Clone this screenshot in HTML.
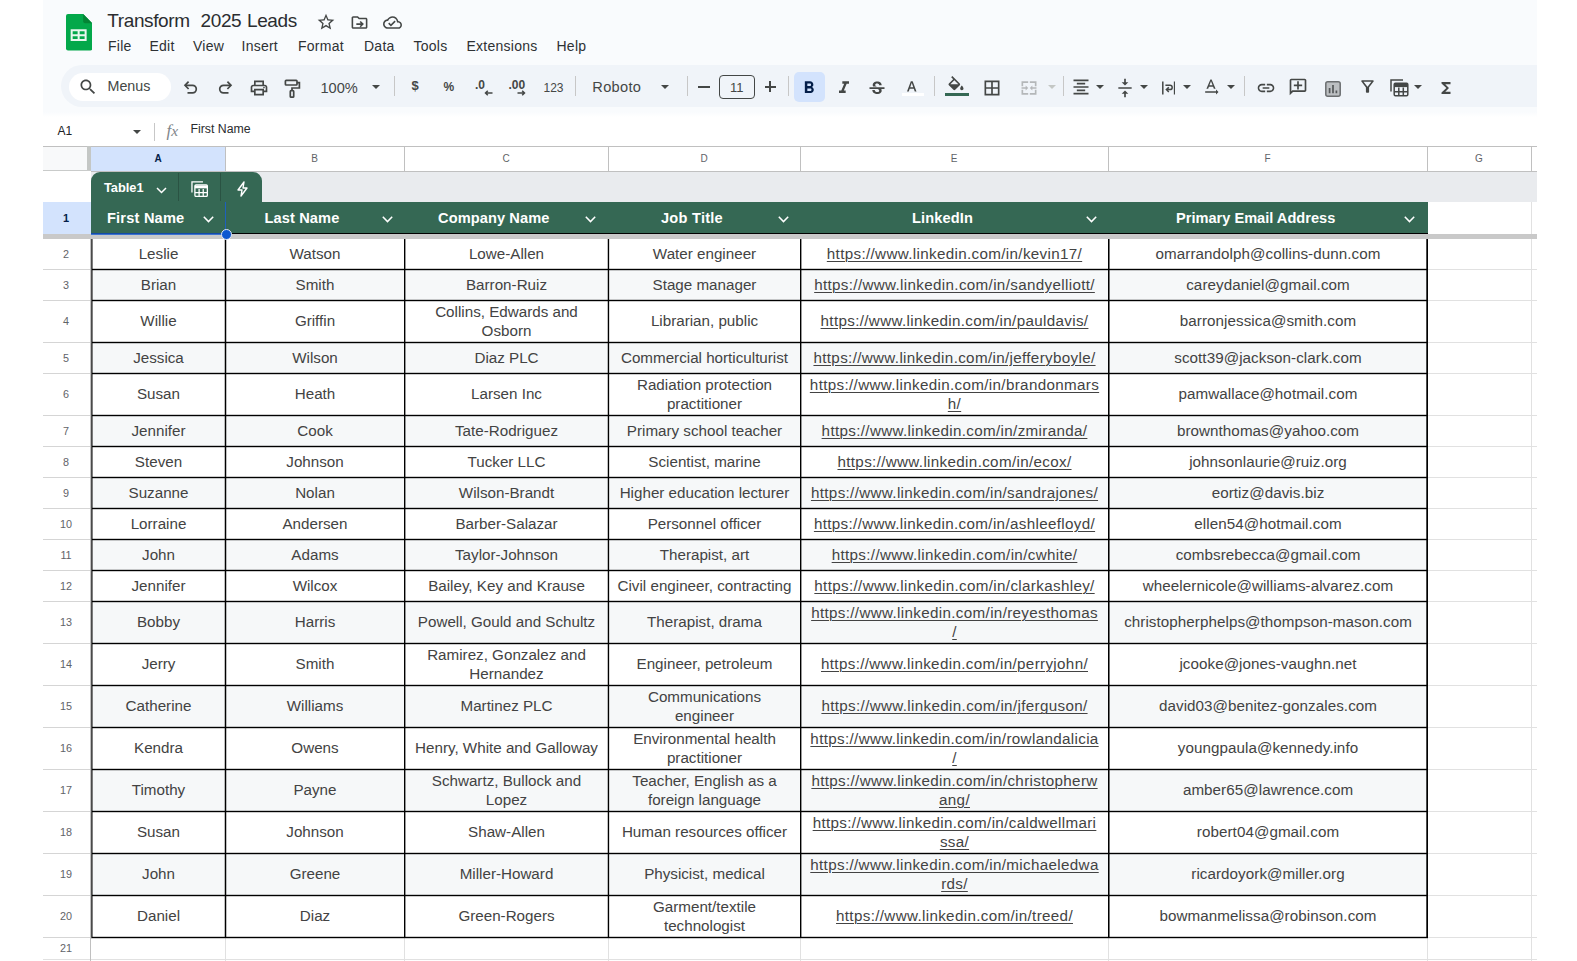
<!DOCTYPE html>
<html>
<head>
<meta charset="utf-8">
<title>Transform 2025 Leads</title>
<style>
html,body{margin:0;padding:0;background:#fff;}
body{width:1577px;height:961px;overflow:hidden;position:relative;font-family:"Liberation Sans",sans-serif;}
div,span,svg{position:absolute;box-sizing:border-box;}
.t{white-space:nowrap;line-height:1;}
.c{display:flex;align-items:center;justify-content:center;text-align:center;color:#434343;font-size:15.2px;line-height:18.5px;white-space:nowrap;padding-top:0.4px;}
.c span{position:static;}
.lk span{text-decoration:underline;text-decoration-thickness:1px;text-underline-offset:2px;letter-spacing:.34px;}
.em span{letter-spacing:.06px;}
.h{color:#fff;font-weight:700;font-size:14.6px;white-space:nowrap;line-height:1;}
.rn{color:#5f6368;font-size:10.8px;text-align:center;line-height:1;white-space:nowrap;}
.cn{color:#5f6368;font-size:10px;text-align:center;line-height:1;white-space:nowrap;}
.m{color:#2e3134;letter-spacing:.25px;font-size:14px;white-space:nowrap;line-height:1;top:39px;}
.sep{width:1px;background:#c7c7c7;top:76px;height:20px;}
.ic{fill:none;stroke:#444746;stroke-width:1.6;}
</style>
</head>
<body>
<div style="left:43px;top:0px;width:1494px;height:112px;background:#f9fbfd;"></div>
<div style="left:43px;top:112px;width:1494px;height:5px;background:linear-gradient(#f9fbfd,#fff);"></div>
<svg style="left:66px;top:14.2px;" width="26.3" height="36.6" viewBox="0 0 26 36"><path d="M2 0 H17 L26 9 V34 Q26 36 24 36 H2 Q0 36 0 34 V2 Q0 0 2 0 Z" fill="#03a84a"/><path d="M17 0 L26 9 H19 Q17 9 17 7 Z" fill="#048435"/><path d="M4.6 15 H20.4 V26.7 H4.6 Z M6.6 17 V19.9 H11.5 V17 Z M13.5 17 V19.9 H18.4 V17 Z M6.6 21.8 V24.7 H11.5 V21.8 Z M13.5 21.8 V24.7 H18.4 V21.8 Z" fill="#e9f7ee" fill-rule="evenodd"/></svg>
<div class="t" style="left:107.3px;top:11.2px;font-size:19px;letter-spacing:-.4px;color:#2b2d30;">Transform</div>
<div class="t" style="left:200.6px;top:11.2px;font-size:19px;letter-spacing:-.4px;color:#2b2d30;">2025</div>
<div class="t" style="left:247px;top:11.2px;font-size:19px;letter-spacing:-.4px;color:#2b2d30;">Leads</div>
<svg style="left:315.5px;top:11.7px;" width="20" height="20" viewBox="0 0 24 24"><path d="M22 9.24l-7.19-.62L12 2 9.19 8.63 2 9.24l5.46 4.73L5.82 21 12 17.27 18.18 21l-1.63-7.03L22 9.24zM12 15.4l-3.76 2.27 1-4.28-3.32-2.88 4.38-.38L12 6.1l1.71 4.04 4.38.38-3.32 2.88 1 4.28L12 15.4z" fill="#444746"/></svg>
<svg style="left:349.8px;top:13px;" width="19" height="19" viewBox="0 0 24 24"><path d="M20 6h-8l-2-2H4c-1.1 0-2 .9-2 2v12c0 1.1.9 2 2 2h16c1.1 0 2-.9 2-2V8c0-1.1-.9-2-2-2zm0 12H4V6h5.17l2 2H20v10zm-7.84-1.41L13.58 18l4-4-4-4-1.42 1.41L13.75 13H8v2h5.75z" fill="#444746"/></svg>
<svg style="left:383.1px;top:12.8px;" width="19" height="19" viewBox="0 0 24 24"><path d="M19.35 10.04C18.67 6.59 15.64 4 12 4 9.11 4 6.6 5.64 5.35 8.04 2.34 8.36 0 10.91 0 14c0 3.31 2.69 6 6 6h13c2.76 0 5-2.24 5-5 0-2.64-2.05-4.78-4.65-4.96zM19 18H6c-2.21 0-4-1.79-4-4 0-2.05 1.53-3.76 3.56-3.97l1.07-.11.5-.95C8.08 7.14 9.94 6 12 6c2.62 0 4.88 1.86 5.39 4.43l.3 1.5 1.53.11c1.56.1 2.78 1.41 2.78 2.96 0 1.65-1.35 3-3 3zm-9-3.82l-2.09-2.09L6.5 13.5 10 17l6.01-6.01-1.41-1.41z" fill="#444746"/></svg>
<div class="m" style="left:108px;">File</div>
<div class="m" style="left:149.5px;">Edit</div>
<div class="m" style="left:193px;">View</div>
<div class="m" style="left:241.5px;">Insert</div>
<div class="m" style="left:298px;">Format</div>
<div class="m" style="left:364px;">Data</div>
<div class="m" style="left:413.5px;">Tools</div>
<div class="m" style="left:466.5px;">Extensions</div>
<div class="m" style="left:556.5px;">Help</div>
<div style="left:61px;top:65px;width:1476px;height:42px;background:#f0f4f9;border-radius:21px 0 0 21px;"></div>
<div style="left:69px;top:73px;width:102px;height:28px;background:#fff;border-radius:14px;"></div>
<svg style="left:77.5px;top:77.2px;" width="20" height="20" viewBox="0 0 24 24"><path d="M15.5 14h-.79l-.28-.27C15.41 12.59 16 11.11 16 9.5 16 5.91 13.09 3 9.5 3S3 5.91 3 9.5 5.91 16 9.5 16c1.61 0 3.09-.59 4.23-1.57l.27.28v.79l5 4.99L20.49 19l-4.99-5zm-6 0C7.01 14 5 11.99 5 9.5S7.01 5 9.5 5 14 7.01 14 9.5 11.99 14 9.5 14z" fill="#444746"/></svg>
<div class="t" style="left:107.5px;top:79px;font-size:14.3px;color:#444746;">Menus</div>
<svg style="left:183px;top:79.4px;" width="16" height="16" viewBox="0 0 16 16"><g fill="none" stroke="#444746" stroke-width="1.7"><path d="M2.2 6.3 H9.5 A3.8 3.8 0 0 1 9.5 13.9 H4.5"/><path d="M5.6 2.6 L2 6.3 L5.6 10"/></g></svg>
<svg style="left:216.5px;top:79.4px;" width="16" height="16" viewBox="0 0 16 16"><g fill="none" stroke="#444746" stroke-width="1.7"><path d="M13.8 6.3 H6.5 A3.8 3.8 0 0 0 6.5 13.9 H11.5"/><path d="M10.4 2.6 L14 6.3 L10.4 10"/></g></svg>
<svg style="left:248.8px;top:78px;" width="20" height="20" viewBox="0 0 24 24"><path d="M19 8h-1V3H6v5H5c-1.66 0-3 1.34-3 3v6h4v4h12v-4h4v-6c0-1.66-1.34-3-3-3zM8 5h8v3H8V5zm8 14H8v-4h8v4zm4-4h-2v-2H6v2H4v-4c0-.55.45-1 1-1h14c.55 0 1 .45 1 1v4z M17 11.5a1 1 0 1 0 2 0a1 1 0 1 0 -2 0z" fill="#444746"/></svg>
<svg style="left:282px;top:77.5px;" width="20" height="21" viewBox="0 0 20 21"><g fill="none" stroke="#444746" stroke-width="1.7"><rect x="3.4" y="2.4" width="11.6" height="4.6" rx="0.8"/><path d="M15 4.7 H17.4 V10 H10 V12.6"/><rect x="8.3" y="12.6" width="3.4" height="6.6" rx="0.8"/></g></svg>
<div class="t" style="left:320.5px;top:80.8px;font-size:14.6px;color:#444746;">100%</div>
<svg style="left:371.5px;top:84.6px;" width="8" height="4" viewBox="0 0 8 4"><path d="M0 0 H8 L4 4 Z" fill="#444746"/></svg>
<div style="left:394.4px;top:76px;width:1px;height:20px;background:#c7c7c7;"></div>
<div style="left:575px;top:76px;width:1px;height:20px;background:#c7c7c7;"></div>
<div style="left:687px;top:76px;width:1px;height:20px;background:#c7c7c7;"></div>
<div style="left:788px;top:76px;width:1px;height:20px;background:#c7c7c7;"></div>
<div style="left:934px;top:76px;width:1px;height:20px;background:#c7c7c7;"></div>
<div style="left:1063px;top:76px;width:1px;height:20px;background:#c7c7c7;"></div>
<div style="left:1244px;top:76px;width:1px;height:20px;background:#c7c7c7;"></div>
<div class="t" style="left:411.5px;top:79.3px;font-size:13px;color:#444746;font-weight:700;">$</div>
<div class="t" style="left:443.5px;top:80.5px;font-size:12px;color:#444746;font-weight:700;">%</div>
<div class="t" style="left:475px;top:78.5px;font-size:12px;color:#444746;font-weight:700;">.0</div>
<svg style="left:484px;top:89.6px;" width="9" height="6" viewBox="0 0 9 6"><path d="M8.5 3 H1.5 M3.8 0.7 L1.5 3 L3.8 5.3" fill="none" stroke="#444746" stroke-width="1.5"/></svg>
<div class="t" style="left:508.5px;top:78.5px;font-size:12px;color:#444746;font-weight:700;">.00</div>
<svg style="left:517px;top:89.6px;" width="9" height="6" viewBox="0 0 9 6"><path d="M0.5 3 H7.5 M5.2 0.7 L7.5 3 L5.2 5.3" fill="none" stroke="#444746" stroke-width="1.5"/></svg>
<div class="t" style="left:543.5px;top:81.5px;font-size:12px;color:#444746;">123</div>
<div class="t" style="left:592.3px;top:80px;font-size:14.6px;letter-spacing:.3px;color:#444746;">Roboto</div>
<svg style="left:661.3px;top:84.6px;" width="8" height="4" viewBox="0 0 8 4"><path d="M0 0 H8 L4 4 Z" fill="#444746"/></svg>
<div style="left:697.5px;top:86px;width:12.5px;height:1.6px;background:#444746;"></div>
<div style="left:719px;top:74.5px;width:35.5px;height:24.5px;border:1px solid #444746;border-radius:4px;"></div>
<div class="t" style="left:719px;top:80.5px;width:35.5px;text-align:center;font-size:13px;color:#444746;">11</div>
<div style="left:764.5px;top:86px;width:11px;height:1.6px;background:#444746;"></div>
<div style="left:769.2px;top:81.3px;width:1.6px;height:11px;background:#444746;"></div>
<div style="left:794px;top:71.5px;width:31px;height:30px;background:#d3e3fd;border-radius:5px;"></div>
<svg style="left:799.3px;top:77.8px;" width="20" height="20" viewBox="0 0 24 24"><path d="M15.6 10.79c.97-.67 1.65-1.77 1.65-2.79 0-2.26-1.75-4-4-4H7v14h7.04c2.09 0 3.71-1.7 3.71-3.79 0-1.52-.86-2.82-2.15-3.42zM10 6.5h3c.83 0 1.5.67 1.5 1.5s-.67 1.5-1.5 1.5h-3v-3zm3.5 9H10v-3h3.5c.83 0 1.5.67 1.5 1.5s-.67 1.5-1.5 1.5z" fill="#041e49"/></svg>
<svg style="left:834px;top:77.5px;" width="20" height="20" viewBox="0 0 24 24"><path d="M10 4v3h2.21l-3.42 8H6v3h8v-3h-2.21l3.42-8H18V4z" fill="#444746"/></svg>
<svg style="left:867.4px;top:79px;" width="20" height="20" viewBox="0 0 24 24"><path d="M7.24 8.75c-.26-.48-.39-1.03-.39-1.67 0-.61.13-1.16.4-1.67.26-.5.63-.93 1.11-1.29.48-.35 1.05-.63 1.7-.83.66-.19 1.39-.29 2.18-.29.81 0 1.54.11 2.21.34.66.22 1.23.54 1.69.94.47.4.83.88 1.08 1.43.25.55.38 1.15.38 1.81h-3.01c0-.31-.05-.59-.15-.85-.09-.27-.24-.49-.44-.68-.2-.19-.45-.33-.75-.44-.3-.1-.66-.16-1.06-.16-.39 0-.74.04-1.03.13-.29.09-.53.21-.72.36-.19.16-.34.34-.44.55-.1.21-.15.43-.15.66 0 .48.25.88.74 1.21.38.25.77.48 1.41.7H7.39c-.05-.08-.11-.17-.15-.25zM21 12v-2H3v2h9.62c.18.07.4.14.55.2.37.17.66.34.87.51.21.17.35.36.43.57.07.2.11.43.11.69 0 .23-.05.45-.14.66-.09.2-.23.38-.42.53-.19.15-.42.26-.71.35-.29.08-.63.13-1.01.13-.43 0-.83-.04-1.18-.13s-.66-.23-.91-.42c-.25-.19-.45-.44-.59-.75-.14-.31-.25-.76-.25-1.21H6.4c0 .55.08 1.13.24 1.58.16.45.37.85.65 1.21.28.35.6.66.98.92.37.26.78.48 1.22.65.44.17.9.3 1.38.39.48.08.96.13 1.44.13.8 0 1.53-.09 2.18-.28s1.21-.45 1.67-.79c.46-.34.82-.77 1.07-1.27s.38-1.07.38-1.71c0-.6-.1-1.14-.31-1.61-.05-.11-.11-.23-.17-.33H21z" fill="#444746"/></svg>
<svg style="left:903.4px;top:79.3px;" width="17.5" height="17.5" viewBox="0 0 24 24"><path d="M5.49 17h2.42l1.27-3.58h5.65L16.09 17h2.42L13.25 3h-2.5L5.49 17zm4.42-5.61l2.03-5.79h.12l2.03 5.79H9.91z" fill="#444746"/></svg>
<div style="left:901.5px;top:93.4px;width:22.5px;height:2.5px;background:#fff;"></div>
<svg style="left:946.3px;top:75.6px;" width="20" height="20" viewBox="0 0 24 24"><path d="M16.56 8.94L7.62 0 6.21 1.41l2.38 2.38-5.15 5.15c-.59.59-.59 1.54 0 2.12l5.5 5.5c.29.29.68.44 1.06.44s.77-.15 1.06-.44l5.5-5.5c.59-.58.59-1.53 0-2.12zM5.21 10L10 5.21 14.79 10H5.21zM19 11.5s-2 2.17-2 3.5c0 1.1.9 2 2 2s2-.9 2-2c0-1.33-2-3.5-2-3.5z" fill="#444746"/></svg>
<div style="left:944.5px;top:93px;width:24.5px;height:3px;background:#356854;"></div>
<svg style="left:982.3px;top:78px;" width="20" height="20" viewBox="0 0 24 24"><path d="M3 3v18h18V3H3zm8 16H5v-6h6v6zm0-8H5V5h6v6zm8 8h-6v-6h6v6zm0-8h-6V5h6v6z" fill="#444746"/></svg>
<svg style="left:1018.5px;top:78px;" width="20" height="20" viewBox="0 0 24 24"><path d="M5 10H3V4h8v2H5v4zm14 8h-6v2h8v-6h-2v4zM5 18v-4H3v6h8v-2H5zM21 4h-8v2h6v4h2V4zM8 13v2l3-3-3-3v2H3v2h5zm8-2V9l-3 3 3 3v-2h5v-2h-5z" fill="#b4b7b9"/></svg>
<svg style="left:1047.5px;top:85.2px;" width="8" height="4" viewBox="0 0 8 4"><path d="M0 0 H8 L4 4 Z" fill="#c4c7c5"/></svg>
<svg style="left:1071px;top:77px;" width="20" height="20" viewBox="0 0 24 24"><path d="M7 15v2h10v-2H7zm-4 6h18v-2H3v2zm0-8h18v-2H3v2zm4-6v2h10V7H7zM3 3v2h18V3H3z" fill="#444746"/></svg>
<svg style="left:1096px;top:85.2px;" width="8" height="4" viewBox="0 0 8 4"><path d="M0 0 H8 L4 4 Z" fill="#444746"/></svg>
<svg style="left:1114.8px;top:78px;" width="20" height="20" viewBox="0 0 24 24"><path d="M8 19h3v4h2v-4h3l-4-4-4 4zm8-14h-3V1h-2v4H8l4 4 4-4zM4 11v2h16v-2H4z" fill="#444746"/></svg>
<svg style="left:1140px;top:85.2px;" width="8" height="4" viewBox="0 0 8 4"><path d="M0 0 H8 L4 4 Z" fill="#444746"/></svg>
<svg style="left:1161.6px;top:80.6px;" width="13.4" height="14" viewBox="0 0 13.4 14"><g fill="none" stroke="#444746" stroke-width="1.5"><path d="M0.8 0.5 V13.5 M12.6 0.5 V13.5 M3.4 4.2 H8 A2.1 2.1 0 0 1 8 8.6 H4.6 M6.8 6.2 L4.4 8.6 L6.8 11"/></g></svg>
<svg style="left:1183px;top:85.2px;" width="8" height="4" viewBox="0 0 8 4"><path d="M0 0 H8 L4 4 Z" fill="#444746"/></svg>
<svg style="left:1201.3px;top:76.7px;" width="20" height="20" viewBox="0 0 24 24"><path d="M21 18l-3-3v2H5v2h13v2l3-3zM9.5 11.8h5l.9 2.2h2.1L12.75 3h-1.5L6.5 14h2.1l.9-2.2zM12 4.98L13.87 10h-3.74L12 4.98z" fill="#444746"/></svg>
<svg style="left:1227px;top:85.2px;" width="8" height="4" viewBox="0 0 8 4"><path d="M0 0 H8 L4 4 Z" fill="#444746"/></svg>
<svg style="left:1255.5px;top:77.7px;" width="20" height="20" viewBox="0 0 24 24"><path d="M3.9 12c0-1.71 1.39-3.1 3.1-3.1h4V7H7c-2.76 0-5 2.24-5 5s2.24 5 5 5h4v-1.9H7c-1.71 0-3.1-1.39-3.1-3.1zM8 13h8v-2H8v2zm9-6h-4v1.9h4c1.71 0 3.1 1.39 3.1 3.1s-1.39 3.1-3.1 3.1h-4V17h4c2.76 0 5-2.24 5-5s-2.24-5-5-5z" fill="#444746"/></svg>
<svg style="left:1288px;top:77.3px;transform:scaleX(-1);" width="20" height="20" viewBox="0 0 24 24"><path d="M22 4c0-1.1-.9-2-2-2H4c-1.1 0-2 .9-2 2v12c0 1.1.9 2 2 2h14l4 4V4zm-2 13.17L18.83 16H4V4h16v13.17zM13 5h-2v4H7v2h4v4h2v-4h4V9h-4z" fill="#444746"/></svg>
<svg style="left:1325.3px;top:80.5px;" width="16" height="16" viewBox="0 0 16 16"><rect x="0.8" y="0.8" width="14.4" height="14.4" rx="2" fill="#bcbfc2" stroke="#6b6e70" stroke-width="1.5"/><path d="M4.6 12.3 V7 M8 12.3 V4 M11.4 12.3 V9.6" stroke="#55585a" stroke-width="1.7" fill="none"/></svg>
<svg style="left:1357.8px;top:77.2px;" width="19" height="19" viewBox="0 0 24 24"><path d="M7 6h10l-5.01 6.3L7 6zm-2.75-.39C6.27 8.2 10 13 10 13v6c0 .55.45 1 1 1h2c.55 0 1-.45 1-1v-6s3.72-4.8 5.74-7.39c.51-.66.04-1.61-.79-1.61H5.04c-.83 0-1.3.95-.79 1.61z" fill="#444746"/></svg>
<svg style="left:1389.5px;top:79px;" width="19" height="18" viewBox="0 0 19 18"><g fill="none" stroke="#444746" stroke-width="1.5"><path d="M1 12.5 V1 H13"/><rect x="4.2" y="4.2" width="13.6" height="12.6" rx="1.2"/><path d="M4.2 6.4 H17.8" stroke-width="3.4"/><path d="M4.2 12.7 H17.8 M8.8 8.6 V16.8 M13.3 8.6 V16.8"/></g></svg>
<svg style="left:1414px;top:85.2px;" width="8" height="4" viewBox="0 0 8 4"><path d="M0 0 H8 L4 4 Z" fill="#444746"/></svg>
<svg style="left:1436.6px;top:79.15px;" width="18" height="18" viewBox="0 0 24 24"><path d="M18 4H6v2l6.5 6L6 18v2h12v-3h-7l5-5-5-5h7z" fill="#444746"/></svg>
<div class="t" style="left:57.5px;top:124.8px;font-size:12px;color:#202124;">A1</div>
<svg style="left:132.5px;top:130px;" width="8" height="4" viewBox="0 0 8 4"><path d="M0 0 H8 L4 4 Z" fill="#444746"/></svg>
<div style="left:153.5px;top:122.5px;width:1px;height:18.5px;background:#c7c7c7;"></div>
<div class="t" style="left:166.5px;top:121.5px;font-size:17px;color:#80868b;font-family:'Liberation Serif',serif;font-style:italic;">f<span style="position:static;font-size:15.5px;">x</span></div>
<div class="t" style="left:190.5px;top:122.8px;font-size:12.3px;color:#2a2c2f;">First Name</div>
<div style="left:43px;top:146px;width:1494px;height:25px;background:#fff;border-top:1px solid #c0c0c0;"></div>
<div style="left:43px;top:146px;width:44px;height:25px;background:#f8f9fa;border-top:1px solid #c0c0c0;"></div>
<div style="left:87px;top:146px;width:4px;height:26px;background:#c4c7c5;"></div>
<div style="left:43px;top:170px;width:48px;height:2px;background:#c9cbca;"></div>
<div style="left:91px;top:147px;width:134px;height:24px;background:#d3e3fd;"></div>
<div style="left:91px;top:171px;width:1446px;height:1px;background:#c0c0c0;"></div>
<div class="cn" style="left:91px;top:154px;width:134px;color:#041e49;font-weight:700;">A</div>
<div style="left:225px;top:147px;width:1px;height:24px;background:#c0c0c0;"></div>
<div class="cn" style="left:225px;top:154px;width:179px;">B</div>
<div style="left:404px;top:147px;width:1px;height:24px;background:#c0c0c0;"></div>
<div class="cn" style="left:404px;top:154px;width:204px;">C</div>
<div style="left:608px;top:147px;width:1px;height:24px;background:#c0c0c0;"></div>
<div class="cn" style="left:608px;top:154px;width:192px;">D</div>
<div style="left:800px;top:147px;width:1px;height:24px;background:#c0c0c0;"></div>
<div class="cn" style="left:800px;top:154px;width:308px;">E</div>
<div style="left:1108px;top:147px;width:1px;height:24px;background:#c0c0c0;"></div>
<div class="cn" style="left:1108px;top:154px;width:319px;">F</div>
<div style="left:1427px;top:147px;width:1px;height:24px;background:#c0c0c0;"></div>
<div class="cn" style="left:1427px;top:154px;width:104px;">G</div>
<div style="left:1531px;top:147px;width:1px;height:24px;background:#c0c0c0;"></div>
<div style="left:43px;top:171px;width:48px;height:31px;background:#fff;"></div>
<div style="left:91px;top:172px;width:1446px;height:30px;background:#e9ebee;"></div>
<div style="left:43px;top:202px;width:48px;height:32px;background:#d3e3fd;"></div>
<div class="rn" style="left:43px;top:213px;width:46px;color:#041e49;font-weight:700;font-size:11px;">1</div>
<div style="left:91px;top:202px;width:1337px;height:32px;background:#356854;border-bottom:1px solid #000;"></div>
<div style="left:1428px;top:202px;width:109px;height:32px;background:#fff;"></div>
<div style="left:1531px;top:202px;width:1px;height:32px;background:#e1e1e1;"></div>
<div style="left:91px;top:172px;width:171px;height:30px;"><div style="left:0;top:0;width:171px;height:30px;background:#356854;border-radius:9px 9px 0 0;"></div><div style="left:87px;top:1px;width:1px;height:28px;background:#2a5343;"></div><div style="left:129px;top:1px;width:1px;height:28px;background:#2a5343;"></div><div class="t" style="left:13px;top:10px;color:#fff;font-weight:700;font-size:12.8px;">Table1</div><svg style="left:65px;top:15px" width="11" height="7" viewBox="0 0 11 7"><path d="M1 1 L5.5 5.5 L10 1" fill="none" stroke="#fff" stroke-width="1.5"/></svg><svg style="left:99.5px;top:8.5px" width="17.5" height="16.5" viewBox="0 0 19 18"><g fill="none" stroke="#fff" stroke-width="1.4"><path d="M1 12.5 V1 H13"/><rect x="4.2" y="4.2" width="13.6" height="12.6" rx="1.2"/><path d="M4.2 6.4 H17.8" stroke-width="3.2"/><path d="M4.2 12.7 H17.8 M8.8 8.6 V16.8 M13.3 8.6 V16.8"/></g></svg><svg style="left:145px;top:9px" width="13" height="16" viewBox="0 0 13 16"><path d="M8 1 L2 9 H6 L5 15 L11 7 H7 Z" fill="none" stroke="#fff" stroke-width="1.4" stroke-linejoin="round"/></svg></div>
<div class="h" style="left:107px;top:210.9px;letter-spacing:0.2px;">First Name</div>
<svg style="left:203px;top:216px" width="11" height="7" viewBox="0 0 11 7"><path d="M0.8 0.8 L5.5 5.6 L10.2 0.8" fill="none" stroke="#fff" stroke-width="1.5"/></svg>
<div class="h" style="left:264.5px;top:210.9px;letter-spacing:0.12px;">Last Name</div>
<svg style="left:382px;top:216px" width="11" height="7" viewBox="0 0 11 7"><path d="M0.8 0.8 L5.5 5.6 L10.2 0.8" fill="none" stroke="#fff" stroke-width="1.5"/></svg>
<div class="h" style="left:438px;top:210.9px;letter-spacing:0.1px;">Company Name</div>
<svg style="left:585.3px;top:216px" width="11" height="7" viewBox="0 0 11 7"><path d="M0.8 0.8 L5.5 5.6 L10.2 0.8" fill="none" stroke="#fff" stroke-width="1.5"/></svg>
<div class="h" style="left:661px;top:210.9px;letter-spacing:0.25px;">Job Title</div>
<svg style="left:778px;top:216px" width="11" height="7" viewBox="0 0 11 7"><path d="M0.8 0.8 L5.5 5.6 L10.2 0.8" fill="none" stroke="#fff" stroke-width="1.5"/></svg>
<div class="h" style="left:912px;top:210.9px;letter-spacing:0.12px;">LinkedIn</div>
<svg style="left:1085.7px;top:216px" width="11" height="7" viewBox="0 0 11 7"><path d="M0.8 0.8 L5.5 5.6 L10.2 0.8" fill="none" stroke="#fff" stroke-width="1.5"/></svg>
<div class="h" style="left:1176px;top:210.9px;letter-spacing:0px;">Primary Email Address</div>
<svg style="left:1404.3px;top:216px" width="11" height="7" viewBox="0 0 11 7"><path d="M0.8 0.8 L5.5 5.6 L10.2 0.8" fill="none" stroke="#fff" stroke-width="1.5"/></svg>
<div style="left:43px;top:234px;width:1494px;height:5px;background:#c9c9c9;"></div>
<div style="left:43px;top:239px;width:47px;height:30px;background:#fff;"></div>
<div class="rn" style="left:43px;top:248.5px;width:46px;">2</div>
<div style="left:43px;top:269px;width:48px;height:1px;background:#d5d5d5;"></div>
<div style="left:92px;top:239px;width:1336px;height:30px;background:#fff;"></div>
<div style="left:1428px;top:269px;width:109px;height:1px;background:#e1e1e1;"></div>
<div class="c" style="left:92px;top:239px;width:133px;height:30px;"><div style="position:static"><span>Leslie</span></div></div>
<div class="c" style="left:226px;top:239px;width:178px;height:30px;"><div style="position:static"><span>Watson</span></div></div>
<div class="c" style="left:405px;top:239px;width:203px;height:30px;"><div style="position:static"><span>Lowe-Allen</span></div></div>
<div class="c" style="left:609px;top:239px;width:191px;height:30px;"><div style="position:static"><span>Water engineer</span></div></div>
<div class="c lk" style="left:801px;top:239px;width:307px;height:30px;"><div style="position:static"><span>https://www.linkedin.com/in/kevin17/</span></div></div>
<div class="c em" style="left:1109px;top:239px;width:318px;height:30px;"><div style="position:static"><span>omarrandolph@collins-dunn.com</span></div></div>
<div style="left:43px;top:270px;width:47px;height:30px;background:#fff;"></div>
<div class="rn" style="left:43px;top:279.5px;width:46px;">3</div>
<div style="left:43px;top:300px;width:48px;height:1px;background:#d5d5d5;"></div>
<div style="left:92px;top:270px;width:1336px;height:30px;background:#f6f8f9;"></div>
<div style="left:1428px;top:300px;width:109px;height:1px;background:#e1e1e1;"></div>
<div class="c" style="left:92px;top:270px;width:133px;height:30px;"><div style="position:static"><span>Brian</span></div></div>
<div class="c" style="left:226px;top:270px;width:178px;height:30px;"><div style="position:static"><span>Smith</span></div></div>
<div class="c" style="left:405px;top:270px;width:203px;height:30px;"><div style="position:static"><span>Barron-Ruiz</span></div></div>
<div class="c" style="left:609px;top:270px;width:191px;height:30px;"><div style="position:static"><span>Stage manager</span></div></div>
<div class="c lk" style="left:801px;top:270px;width:307px;height:30px;"><div style="position:static"><span>https://www.linkedin.com/in/sandyelliott/</span></div></div>
<div class="c em" style="left:1109px;top:270px;width:318px;height:30px;"><div style="position:static"><span>careydaniel@gmail.com</span></div></div>
<div style="left:43px;top:301px;width:47px;height:41px;background:#fff;"></div>
<div class="rn" style="left:43px;top:316.0px;width:46px;">4</div>
<div style="left:43px;top:342px;width:48px;height:1px;background:#d5d5d5;"></div>
<div style="left:92px;top:301px;width:1336px;height:41px;background:#fff;"></div>
<div style="left:1428px;top:342px;width:109px;height:1px;background:#e1e1e1;"></div>
<div class="c" style="left:92px;top:301px;width:133px;height:41px;"><div style="position:static"><span>Willie</span></div></div>
<div class="c" style="left:226px;top:301px;width:178px;height:41px;"><div style="position:static"><span>Griffin</span></div></div>
<div class="c" style="left:405px;top:301px;width:203px;height:41px;"><div style="position:static"><span>Collins, Edwards and</span><br><span>Osborn</span></div></div>
<div class="c" style="left:609px;top:301px;width:191px;height:41px;"><div style="position:static"><span>Librarian, public</span></div></div>
<div class="c lk" style="left:801px;top:301px;width:307px;height:41px;"><div style="position:static"><span>https://www.linkedin.com/in/pauldavis/</span></div></div>
<div class="c em" style="left:1109px;top:301px;width:318px;height:41px;"><div style="position:static"><span>barronjessica@smith.com</span></div></div>
<div style="left:43px;top:343px;width:47px;height:30px;background:#fff;"></div>
<div class="rn" style="left:43px;top:352.5px;width:46px;">5</div>
<div style="left:43px;top:373px;width:48px;height:1px;background:#d5d5d5;"></div>
<div style="left:92px;top:343px;width:1336px;height:30px;background:#f6f8f9;"></div>
<div style="left:1428px;top:373px;width:109px;height:1px;background:#e1e1e1;"></div>
<div class="c" style="left:92px;top:343px;width:133px;height:30px;"><div style="position:static"><span>Jessica</span></div></div>
<div class="c" style="left:226px;top:343px;width:178px;height:30px;"><div style="position:static"><span>Wilson</span></div></div>
<div class="c" style="left:405px;top:343px;width:203px;height:30px;"><div style="position:static"><span>Diaz PLC</span></div></div>
<div class="c" style="left:609px;top:343px;width:191px;height:30px;"><div style="position:static"><span>Commercial horticulturist</span></div></div>
<div class="c lk" style="left:801px;top:343px;width:307px;height:30px;"><div style="position:static"><span>https://www.linkedin.com/in/jefferyboyle/</span></div></div>
<div class="c em" style="left:1109px;top:343px;width:318px;height:30px;"><div style="position:static"><span>scott39@jackson-clark.com</span></div></div>
<div style="left:43px;top:374px;width:47px;height:41px;background:#fff;"></div>
<div class="rn" style="left:43px;top:389.0px;width:46px;">6</div>
<div style="left:43px;top:415px;width:48px;height:1px;background:#d5d5d5;"></div>
<div style="left:92px;top:374px;width:1336px;height:41px;background:#fff;"></div>
<div style="left:1428px;top:415px;width:109px;height:1px;background:#e1e1e1;"></div>
<div class="c" style="left:92px;top:374px;width:133px;height:41px;"><div style="position:static"><span>Susan</span></div></div>
<div class="c" style="left:226px;top:374px;width:178px;height:41px;"><div style="position:static"><span>Heath</span></div></div>
<div class="c" style="left:405px;top:374px;width:203px;height:41px;"><div style="position:static"><span>Larsen Inc</span></div></div>
<div class="c" style="left:609px;top:374px;width:191px;height:41px;"><div style="position:static"><span>Radiation protection</span><br><span>practitioner</span></div></div>
<div class="c lk" style="left:801px;top:374px;width:307px;height:41px;"><div style="position:static"><span>https://www.linkedin.com/in/brandonmars</span><br><span>h/</span></div></div>
<div class="c em" style="left:1109px;top:374px;width:318px;height:41px;"><div style="position:static"><span>pamwallace@hotmail.com</span></div></div>
<div style="left:43px;top:416px;width:47px;height:30px;background:#fff;"></div>
<div class="rn" style="left:43px;top:425.5px;width:46px;">7</div>
<div style="left:43px;top:446px;width:48px;height:1px;background:#d5d5d5;"></div>
<div style="left:92px;top:416px;width:1336px;height:30px;background:#f6f8f9;"></div>
<div style="left:1428px;top:446px;width:109px;height:1px;background:#e1e1e1;"></div>
<div class="c" style="left:92px;top:416px;width:133px;height:30px;"><div style="position:static"><span>Jennifer</span></div></div>
<div class="c" style="left:226px;top:416px;width:178px;height:30px;"><div style="position:static"><span>Cook</span></div></div>
<div class="c" style="left:405px;top:416px;width:203px;height:30px;"><div style="position:static"><span>Tate-Rodriguez</span></div></div>
<div class="c" style="left:609px;top:416px;width:191px;height:30px;"><div style="position:static"><span>Primary school teacher</span></div></div>
<div class="c lk" style="left:801px;top:416px;width:307px;height:30px;"><div style="position:static"><span>https://www.linkedin.com/in/zmiranda/</span></div></div>
<div class="c em" style="left:1109px;top:416px;width:318px;height:30px;"><div style="position:static"><span>brownthomas@yahoo.com</span></div></div>
<div style="left:43px;top:447px;width:47px;height:30px;background:#fff;"></div>
<div class="rn" style="left:43px;top:456.5px;width:46px;">8</div>
<div style="left:43px;top:477px;width:48px;height:1px;background:#d5d5d5;"></div>
<div style="left:92px;top:447px;width:1336px;height:30px;background:#fff;"></div>
<div style="left:1428px;top:477px;width:109px;height:1px;background:#e1e1e1;"></div>
<div class="c" style="left:92px;top:447px;width:133px;height:30px;"><div style="position:static"><span>Steven</span></div></div>
<div class="c" style="left:226px;top:447px;width:178px;height:30px;"><div style="position:static"><span>Johnson</span></div></div>
<div class="c" style="left:405px;top:447px;width:203px;height:30px;"><div style="position:static"><span>Tucker LLC</span></div></div>
<div class="c" style="left:609px;top:447px;width:191px;height:30px;"><div style="position:static"><span>Scientist, marine</span></div></div>
<div class="c lk" style="left:801px;top:447px;width:307px;height:30px;"><div style="position:static"><span>https://www.linkedin.com/in/ecox/</span></div></div>
<div class="c em" style="left:1109px;top:447px;width:318px;height:30px;"><div style="position:static"><span>johnsonlaurie@ruiz.org</span></div></div>
<div style="left:43px;top:478px;width:47px;height:30px;background:#fff;"></div>
<div class="rn" style="left:43px;top:487.5px;width:46px;">9</div>
<div style="left:43px;top:508px;width:48px;height:1px;background:#d5d5d5;"></div>
<div style="left:92px;top:478px;width:1336px;height:30px;background:#f6f8f9;"></div>
<div style="left:1428px;top:508px;width:109px;height:1px;background:#e1e1e1;"></div>
<div class="c" style="left:92px;top:478px;width:133px;height:30px;"><div style="position:static"><span>Suzanne</span></div></div>
<div class="c" style="left:226px;top:478px;width:178px;height:30px;"><div style="position:static"><span>Nolan</span></div></div>
<div class="c" style="left:405px;top:478px;width:203px;height:30px;"><div style="position:static"><span>Wilson-Brandt</span></div></div>
<div class="c" style="left:609px;top:478px;width:191px;height:30px;"><div style="position:static"><span>Higher education lecturer</span></div></div>
<div class="c lk" style="left:801px;top:478px;width:307px;height:30px;"><div style="position:static"><span>https://www.linkedin.com/in/sandrajones/</span></div></div>
<div class="c em" style="left:1109px;top:478px;width:318px;height:30px;"><div style="position:static"><span>eortiz@davis.biz</span></div></div>
<div style="left:43px;top:509px;width:47px;height:30px;background:#fff;"></div>
<div class="rn" style="left:43px;top:518.5px;width:46px;">10</div>
<div style="left:43px;top:539px;width:48px;height:1px;background:#d5d5d5;"></div>
<div style="left:92px;top:509px;width:1336px;height:30px;background:#fff;"></div>
<div style="left:1428px;top:539px;width:109px;height:1px;background:#e1e1e1;"></div>
<div class="c" style="left:92px;top:509px;width:133px;height:30px;"><div style="position:static"><span>Lorraine</span></div></div>
<div class="c" style="left:226px;top:509px;width:178px;height:30px;"><div style="position:static"><span>Andersen</span></div></div>
<div class="c" style="left:405px;top:509px;width:203px;height:30px;"><div style="position:static"><span>Barber-Salazar</span></div></div>
<div class="c" style="left:609px;top:509px;width:191px;height:30px;"><div style="position:static"><span>Personnel officer</span></div></div>
<div class="c lk" style="left:801px;top:509px;width:307px;height:30px;"><div style="position:static"><span>https://www.linkedin.com/in/ashleefloyd/</span></div></div>
<div class="c em" style="left:1109px;top:509px;width:318px;height:30px;"><div style="position:static"><span>ellen54@hotmail.com</span></div></div>
<div style="left:43px;top:540px;width:47px;height:30px;background:#fff;"></div>
<div class="rn" style="left:43px;top:549.5px;width:46px;">11</div>
<div style="left:43px;top:570px;width:48px;height:1px;background:#d5d5d5;"></div>
<div style="left:92px;top:540px;width:1336px;height:30px;background:#f6f8f9;"></div>
<div style="left:1428px;top:570px;width:109px;height:1px;background:#e1e1e1;"></div>
<div class="c" style="left:92px;top:540px;width:133px;height:30px;"><div style="position:static"><span>John</span></div></div>
<div class="c" style="left:226px;top:540px;width:178px;height:30px;"><div style="position:static"><span>Adams</span></div></div>
<div class="c" style="left:405px;top:540px;width:203px;height:30px;"><div style="position:static"><span>Taylor-Johnson</span></div></div>
<div class="c" style="left:609px;top:540px;width:191px;height:30px;"><div style="position:static"><span>Therapist, art</span></div></div>
<div class="c lk" style="left:801px;top:540px;width:307px;height:30px;"><div style="position:static"><span>https://www.linkedin.com/in/cwhite/</span></div></div>
<div class="c em" style="left:1109px;top:540px;width:318px;height:30px;"><div style="position:static"><span>combsrebecca@gmail.com</span></div></div>
<div style="left:43px;top:571px;width:47px;height:30px;background:#fff;"></div>
<div class="rn" style="left:43px;top:580.5px;width:46px;">12</div>
<div style="left:43px;top:601px;width:48px;height:1px;background:#d5d5d5;"></div>
<div style="left:92px;top:571px;width:1336px;height:30px;background:#fff;"></div>
<div style="left:1428px;top:601px;width:109px;height:1px;background:#e1e1e1;"></div>
<div class="c" style="left:92px;top:571px;width:133px;height:30px;"><div style="position:static"><span>Jennifer</span></div></div>
<div class="c" style="left:226px;top:571px;width:178px;height:30px;"><div style="position:static"><span>Wilcox</span></div></div>
<div class="c" style="left:405px;top:571px;width:203px;height:30px;"><div style="position:static"><span>Bailey, Key and Krause</span></div></div>
<div class="c" style="left:609px;top:571px;width:191px;height:30px;"><div style="position:static"><span>Civil engineer, contracting</span></div></div>
<div class="c lk" style="left:801px;top:571px;width:307px;height:30px;"><div style="position:static"><span>https://www.linkedin.com/in/clarkashley/</span></div></div>
<div class="c em" style="left:1109px;top:571px;width:318px;height:30px;"><div style="position:static"><span>wheelernicole@williams-alvarez.com</span></div></div>
<div style="left:43px;top:602px;width:47px;height:41px;background:#fff;"></div>
<div class="rn" style="left:43px;top:617.0px;width:46px;">13</div>
<div style="left:43px;top:643px;width:48px;height:1px;background:#d5d5d5;"></div>
<div style="left:92px;top:602px;width:1336px;height:41px;background:#f6f8f9;"></div>
<div style="left:1428px;top:643px;width:109px;height:1px;background:#e1e1e1;"></div>
<div class="c" style="left:92px;top:602px;width:133px;height:41px;"><div style="position:static"><span>Bobby</span></div></div>
<div class="c" style="left:226px;top:602px;width:178px;height:41px;"><div style="position:static"><span>Harris</span></div></div>
<div class="c" style="left:405px;top:602px;width:203px;height:41px;"><div style="position:static"><span>Powell, Gould and Schultz</span></div></div>
<div class="c" style="left:609px;top:602px;width:191px;height:41px;"><div style="position:static"><span>Therapist, drama</span></div></div>
<div class="c lk" style="left:801px;top:602px;width:307px;height:41px;"><div style="position:static"><span>https://www.linkedin.com/in/reyesthomas</span><br><span>/</span></div></div>
<div class="c em" style="left:1109px;top:602px;width:318px;height:41px;"><div style="position:static"><span>christopherphelps@thompson-mason.com</span></div></div>
<div style="left:43px;top:644px;width:47px;height:41px;background:#fff;"></div>
<div class="rn" style="left:43px;top:659.0px;width:46px;">14</div>
<div style="left:43px;top:685px;width:48px;height:1px;background:#d5d5d5;"></div>
<div style="left:92px;top:644px;width:1336px;height:41px;background:#fff;"></div>
<div style="left:1428px;top:685px;width:109px;height:1px;background:#e1e1e1;"></div>
<div class="c" style="left:92px;top:644px;width:133px;height:41px;"><div style="position:static"><span>Jerry</span></div></div>
<div class="c" style="left:226px;top:644px;width:178px;height:41px;"><div style="position:static"><span>Smith</span></div></div>
<div class="c" style="left:405px;top:644px;width:203px;height:41px;"><div style="position:static"><span>Ramirez, Gonzalez and</span><br><span>Hernandez</span></div></div>
<div class="c" style="left:609px;top:644px;width:191px;height:41px;"><div style="position:static"><span>Engineer, petroleum</span></div></div>
<div class="c lk" style="left:801px;top:644px;width:307px;height:41px;"><div style="position:static"><span>https://www.linkedin.com/in/perryjohn/</span></div></div>
<div class="c em" style="left:1109px;top:644px;width:318px;height:41px;"><div style="position:static"><span>jcooke@jones-vaughn.net</span></div></div>
<div style="left:43px;top:686px;width:47px;height:41px;background:#fff;"></div>
<div class="rn" style="left:43px;top:701.0px;width:46px;">15</div>
<div style="left:43px;top:727px;width:48px;height:1px;background:#d5d5d5;"></div>
<div style="left:92px;top:686px;width:1336px;height:41px;background:#f6f8f9;"></div>
<div style="left:1428px;top:727px;width:109px;height:1px;background:#e1e1e1;"></div>
<div class="c" style="left:92px;top:686px;width:133px;height:41px;"><div style="position:static"><span>Catherine</span></div></div>
<div class="c" style="left:226px;top:686px;width:178px;height:41px;"><div style="position:static"><span>Williams</span></div></div>
<div class="c" style="left:405px;top:686px;width:203px;height:41px;"><div style="position:static"><span>Martinez PLC</span></div></div>
<div class="c" style="left:609px;top:686px;width:191px;height:41px;"><div style="position:static"><span>Communications</span><br><span>engineer</span></div></div>
<div class="c lk" style="left:801px;top:686px;width:307px;height:41px;"><div style="position:static"><span>https://www.linkedin.com/in/jferguson/</span></div></div>
<div class="c em" style="left:1109px;top:686px;width:318px;height:41px;"><div style="position:static"><span>david03@benitez-gonzales.com</span></div></div>
<div style="left:43px;top:728px;width:47px;height:41px;background:#fff;"></div>
<div class="rn" style="left:43px;top:743.0px;width:46px;">16</div>
<div style="left:43px;top:769px;width:48px;height:1px;background:#d5d5d5;"></div>
<div style="left:92px;top:728px;width:1336px;height:41px;background:#fff;"></div>
<div style="left:1428px;top:769px;width:109px;height:1px;background:#e1e1e1;"></div>
<div class="c" style="left:92px;top:728px;width:133px;height:41px;"><div style="position:static"><span>Kendra</span></div></div>
<div class="c" style="left:226px;top:728px;width:178px;height:41px;"><div style="position:static"><span>Owens</span></div></div>
<div class="c" style="left:405px;top:728px;width:203px;height:41px;"><div style="position:static"><span>Henry, White and Galloway</span></div></div>
<div class="c" style="left:609px;top:728px;width:191px;height:41px;"><div style="position:static"><span>Environmental health</span><br><span>practitioner</span></div></div>
<div class="c lk" style="left:801px;top:728px;width:307px;height:41px;"><div style="position:static"><span>https://www.linkedin.com/in/rowlandalicia</span><br><span>/</span></div></div>
<div class="c em" style="left:1109px;top:728px;width:318px;height:41px;"><div style="position:static"><span>youngpaula@kennedy.info</span></div></div>
<div style="left:43px;top:770px;width:47px;height:41px;background:#fff;"></div>
<div class="rn" style="left:43px;top:785.0px;width:46px;">17</div>
<div style="left:43px;top:811px;width:48px;height:1px;background:#d5d5d5;"></div>
<div style="left:92px;top:770px;width:1336px;height:41px;background:#f6f8f9;"></div>
<div style="left:1428px;top:811px;width:109px;height:1px;background:#e1e1e1;"></div>
<div class="c" style="left:92px;top:770px;width:133px;height:41px;"><div style="position:static"><span>Timothy</span></div></div>
<div class="c" style="left:226px;top:770px;width:178px;height:41px;"><div style="position:static"><span>Payne</span></div></div>
<div class="c" style="left:405px;top:770px;width:203px;height:41px;"><div style="position:static"><span>Schwartz, Bullock and</span><br><span>Lopez</span></div></div>
<div class="c" style="left:609px;top:770px;width:191px;height:41px;"><div style="position:static"><span>Teacher, English as a</span><br><span>foreign language</span></div></div>
<div class="c lk" style="left:801px;top:770px;width:307px;height:41px;"><div style="position:static"><span>https://www.linkedin.com/in/christopherw</span><br><span>ang/</span></div></div>
<div class="c em" style="left:1109px;top:770px;width:318px;height:41px;"><div style="position:static"><span>amber65@lawrence.com</span></div></div>
<div style="left:43px;top:812px;width:47px;height:41px;background:#fff;"></div>
<div class="rn" style="left:43px;top:827.0px;width:46px;">18</div>
<div style="left:43px;top:853px;width:48px;height:1px;background:#d5d5d5;"></div>
<div style="left:92px;top:812px;width:1336px;height:41px;background:#fff;"></div>
<div style="left:1428px;top:853px;width:109px;height:1px;background:#e1e1e1;"></div>
<div class="c" style="left:92px;top:812px;width:133px;height:41px;"><div style="position:static"><span>Susan</span></div></div>
<div class="c" style="left:226px;top:812px;width:178px;height:41px;"><div style="position:static"><span>Johnson</span></div></div>
<div class="c" style="left:405px;top:812px;width:203px;height:41px;"><div style="position:static"><span>Shaw-Allen</span></div></div>
<div class="c" style="left:609px;top:812px;width:191px;height:41px;"><div style="position:static"><span>Human resources officer</span></div></div>
<div class="c lk" style="left:801px;top:812px;width:307px;height:41px;"><div style="position:static"><span>https://www.linkedin.com/in/caldwellmari</span><br><span>ssa/</span></div></div>
<div class="c em" style="left:1109px;top:812px;width:318px;height:41px;"><div style="position:static"><span>robert04@gmail.com</span></div></div>
<div style="left:43px;top:854px;width:47px;height:41px;background:#fff;"></div>
<div class="rn" style="left:43px;top:869.0px;width:46px;">19</div>
<div style="left:43px;top:895px;width:48px;height:1px;background:#d5d5d5;"></div>
<div style="left:92px;top:854px;width:1336px;height:41px;background:#f6f8f9;"></div>
<div style="left:1428px;top:895px;width:109px;height:1px;background:#e1e1e1;"></div>
<div class="c" style="left:92px;top:854px;width:133px;height:41px;"><div style="position:static"><span>John</span></div></div>
<div class="c" style="left:226px;top:854px;width:178px;height:41px;"><div style="position:static"><span>Greene</span></div></div>
<div class="c" style="left:405px;top:854px;width:203px;height:41px;"><div style="position:static"><span>Miller-Howard</span></div></div>
<div class="c" style="left:609px;top:854px;width:191px;height:41px;"><div style="position:static"><span>Physicist, medical</span></div></div>
<div class="c lk" style="left:801px;top:854px;width:307px;height:41px;"><div style="position:static"><span>https://www.linkedin.com/in/michaeledwa</span><br><span>rds/</span></div></div>
<div class="c em" style="left:1109px;top:854px;width:318px;height:41px;"><div style="position:static"><span>ricardoyork@miller.org</span></div></div>
<div style="left:43px;top:896px;width:47px;height:41px;background:#fff;"></div>
<div class="rn" style="left:43px;top:911.0px;width:46px;">20</div>
<div style="left:43px;top:937px;width:48px;height:1px;background:#d5d5d5;"></div>
<div style="left:92px;top:896px;width:1336px;height:41px;background:#fff;"></div>
<div style="left:1428px;top:937px;width:109px;height:1px;background:#e1e1e1;"></div>
<div class="c" style="left:92px;top:896px;width:133px;height:41px;"><div style="position:static"><span>Daniel</span></div></div>
<div class="c" style="left:226px;top:896px;width:178px;height:41px;"><div style="position:static"><span>Diaz</span></div></div>
<div class="c" style="left:405px;top:896px;width:203px;height:41px;"><div style="position:static"><span>Green-Rogers</span></div></div>
<div class="c" style="left:609px;top:896px;width:191px;height:41px;"><div style="position:static"><span>Garment/textile</span><br><span>technologist</span></div></div>
<div class="c lk" style="left:801px;top:896px;width:307px;height:41px;"><div style="position:static"><span>https://www.linkedin.com/in/treed/</span></div></div>
<div class="c em" style="left:1109px;top:896px;width:318px;height:41px;"><div style="position:static"><span>bowmanmelissa@robinson.com</span></div></div>
<div style="left:43px;top:938px;width:47px;height:21px;background:#fff;"></div>
<div class="rn" style="left:43px;top:943px;width:46px;">21</div>
<div style="left:43px;top:959px;width:1494px;height:1px;background:#e1e1e1;"></div>
<div style="left:225px;top:938px;width:1px;height:23px;background:#e1e1e1;"></div>
<div style="left:404px;top:938px;width:1px;height:23px;background:#e1e1e1;"></div>
<div style="left:608px;top:938px;width:1px;height:23px;background:#e1e1e1;"></div>
<div style="left:800px;top:938px;width:1px;height:23px;background:#e1e1e1;"></div>
<div style="left:1108px;top:938px;width:1px;height:23px;background:#e1e1e1;"></div>
<div style="left:1427px;top:938px;width:1px;height:23px;background:#e1e1e1;"></div>
<div style="left:1531px;top:938px;width:1px;height:23px;background:#e1e1e1;"></div>
<div style="left:90px;top:239px;width:1px;height:722px;background:#c0c0c0;"></div>
<div style="left:1531px;top:239px;width:1px;height:722px;background:#e1e1e1;"></div>
<div style="left:91px;top:269px;width:1337px;height:1px;background:#000;box-shadow:0 1px 0 rgba(0,0,0,.2),0 -1px 0 rgba(0,0,0,.2);"></div>
<div style="left:91px;top:300px;width:1337px;height:1px;background:#000;box-shadow:0 1px 0 rgba(0,0,0,.2),0 -1px 0 rgba(0,0,0,.2);"></div>
<div style="left:91px;top:342px;width:1337px;height:1px;background:#000;box-shadow:0 1px 0 rgba(0,0,0,.2),0 -1px 0 rgba(0,0,0,.2);"></div>
<div style="left:91px;top:373px;width:1337px;height:1px;background:#000;box-shadow:0 1px 0 rgba(0,0,0,.2),0 -1px 0 rgba(0,0,0,.2);"></div>
<div style="left:91px;top:415px;width:1337px;height:1px;background:#000;box-shadow:0 1px 0 rgba(0,0,0,.2),0 -1px 0 rgba(0,0,0,.2);"></div>
<div style="left:91px;top:446px;width:1337px;height:1px;background:#000;box-shadow:0 1px 0 rgba(0,0,0,.2),0 -1px 0 rgba(0,0,0,.2);"></div>
<div style="left:91px;top:477px;width:1337px;height:1px;background:#000;box-shadow:0 1px 0 rgba(0,0,0,.2),0 -1px 0 rgba(0,0,0,.2);"></div>
<div style="left:91px;top:508px;width:1337px;height:1px;background:#000;box-shadow:0 1px 0 rgba(0,0,0,.2),0 -1px 0 rgba(0,0,0,.2);"></div>
<div style="left:91px;top:539px;width:1337px;height:1px;background:#000;box-shadow:0 1px 0 rgba(0,0,0,.2),0 -1px 0 rgba(0,0,0,.2);"></div>
<div style="left:91px;top:570px;width:1337px;height:1px;background:#000;box-shadow:0 1px 0 rgba(0,0,0,.2),0 -1px 0 rgba(0,0,0,.2);"></div>
<div style="left:91px;top:601px;width:1337px;height:1px;background:#000;box-shadow:0 1px 0 rgba(0,0,0,.2),0 -1px 0 rgba(0,0,0,.2);"></div>
<div style="left:91px;top:643px;width:1337px;height:1px;background:#000;box-shadow:0 1px 0 rgba(0,0,0,.2),0 -1px 0 rgba(0,0,0,.2);"></div>
<div style="left:91px;top:685px;width:1337px;height:1px;background:#000;box-shadow:0 1px 0 rgba(0,0,0,.2),0 -1px 0 rgba(0,0,0,.2);"></div>
<div style="left:91px;top:727px;width:1337px;height:1px;background:#000;box-shadow:0 1px 0 rgba(0,0,0,.2),0 -1px 0 rgba(0,0,0,.2);"></div>
<div style="left:91px;top:769px;width:1337px;height:1px;background:#000;box-shadow:0 1px 0 rgba(0,0,0,.2),0 -1px 0 rgba(0,0,0,.2);"></div>
<div style="left:91px;top:811px;width:1337px;height:1px;background:#000;box-shadow:0 1px 0 rgba(0,0,0,.2),0 -1px 0 rgba(0,0,0,.2);"></div>
<div style="left:91px;top:853px;width:1337px;height:1px;background:#000;box-shadow:0 1px 0 rgba(0,0,0,.2),0 -1px 0 rgba(0,0,0,.2);"></div>
<div style="left:91px;top:895px;width:1337px;height:1px;background:#000;box-shadow:0 1px 0 rgba(0,0,0,.2),0 -1px 0 rgba(0,0,0,.2);"></div>
<div style="left:91px;top:937px;width:1337px;height:1px;background:#000;box-shadow:0 1px 0 rgba(0,0,0,.2),0 -1px 0 rgba(0,0,0,.2);"></div>
<div style="left:91px;top:239px;width:1px;height:699px;background:#4a4a4a;box-shadow:1px 0 0 rgba(0,0,0,0.5);"></div>
<div style="left:225px;top:239px;width:1px;height:699px;background:#000;box-shadow:-1px 0 0 rgba(0,0,0,0.25),1px 0 0 rgba(0,0,0,0.25);"></div>
<div style="left:404px;top:239px;width:1px;height:699px;background:#000;box-shadow:1px 0 0 rgba(0,0,0,0.4);"></div>
<div style="left:608px;top:239px;width:1px;height:699px;background:#000;box-shadow:-1px 0 0 rgba(0,0,0,0.25),1px 0 0 rgba(0,0,0,0.15);"></div>
<div style="left:800px;top:239px;width:1px;height:699px;background:#000;box-shadow:1px 0 0 rgba(0,0,0,0.4);"></div>
<div style="left:1108px;top:239px;width:1px;height:699px;background:#000;box-shadow:1px 0 0 rgba(0,0,0,0.55);"></div>
<div style="left:1427px;top:239px;width:1px;height:699px;background:#000;box-shadow:-1px 0 0 rgba(0,0,0,0.7);"></div>
<div style="left:91px;top:202px;width:135px;height:33px;border-bottom:2px solid rgba(26,95,208,.8);border-right:1px solid rgba(26,95,208,.85);"></div>
<div style="left:221px;top:229px;width:11px;height:11px;background:#0b57d0;border-radius:50%;border:1px solid #dfe8f8;"></div>
</body>
</html>
